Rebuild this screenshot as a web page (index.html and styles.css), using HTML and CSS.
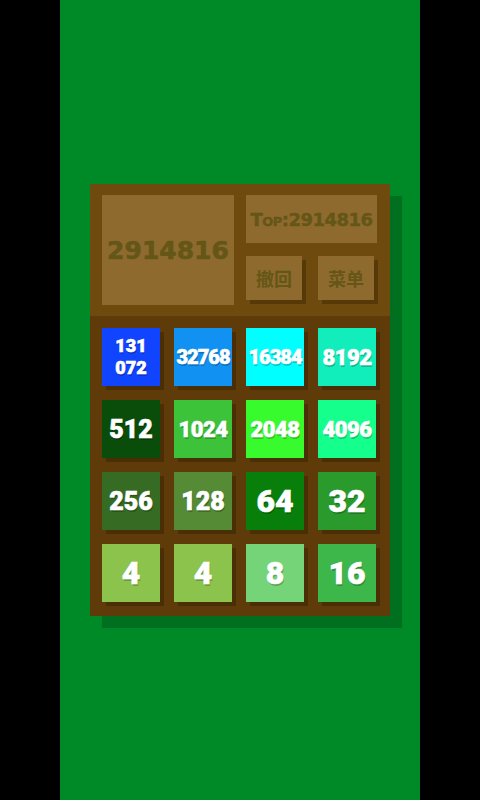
FILE: index.html
```html
<!DOCTYPE html>
<html>
<head>
<meta charset="utf-8">
<link rel="stylesheet" href="styles.css">
</head>
<body>
<div class="screen">
  <div class="board">
    <div class="header">
      <div class="score">2914816</div>
      <div class="side">
        <div class="top">Top:2914816</div>
        <div class="buttons">
          <div class="btn">撤回</div>
          <div class="btn">菜单</div>
        </div>
      </div>
    </div>
    <div class="grid">
      <div class="tile t131072 tiny">131<br>072</div>
      <div class="tile t32768 small">32768</div>
      <div class="tile t16384 small">16384</div>
      <div class="tile t8192 mid">8192</div>
      <div class="tile t512 big">512</div>
      <div class="tile t1024 mid">1024</div>
      <div class="tile t2048 mid">2048</div>
      <div class="tile t4096 mid">4096</div>
      <div class="tile t256 big">256</div>
      <div class="tile t128 big">128</div>
      <div class="tile t64 huge">64</div>
      <div class="tile t32 huge">32</div>
      <div class="tile t4 huge">4</div>
      <div class="tile t4 huge">4</div>
      <div class="tile t8 huge">8</div>
      <div class="tile t16 huge">16</div>
    </div>
  </div>
</div>
</body>
</html>
```
FILE: styles.css
```css
html, body {
  margin: 0;
  padding: 0;
  background: #000;
}
.screen {
  width: 360px;
  height: 800px;
  margin: 0 auto;
  background: #008a27;
  padding-top: 184px;
  box-sizing: border-box;
  font-family: Roboto, "DejaVu Sans", sans-serif;
}
.board {
  margin-left: 30px;
  width: 300px;
  box-shadow: 12px 12px 0 #006f1f;
}
.header {
  background: #6e4a0e;
  padding: 11px 13px 11px 12px;
  display: flex;
  gap: 12px;
}
.score {
  width: 132px;
  height: 110px;
  background: #8f6a2f;
  color: #645616;
  font-family: "DejaVu Sans", sans-serif;
  font-weight: 700;
  font-size: 25px;
  -webkit-text-stroke: 0.6px #645616;
  display: flex;
  align-items: center;
  justify-content: center;
}
.side {
  width: 131px;
  display: flex;
  flex-direction: column;
  gap: 13px;
}
.top {
  height: 48px;
  background: #8f6a2f;
  color: #645616;
  font-family: "DejaVu Sans", sans-serif;
  font-weight: 700;
  font-size: 18px;
  font-variant: small-caps;
  -webkit-text-stroke: 0.4px #645616;
  display: flex;
  align-items: center;
  justify-content: center;
  letter-spacing: -0.5px;
}
.buttons {
  display: flex;
  gap: 16px;
}
.btn {
  width: 56px;
  height: 44px;
  background: #8f6a2f;
  color: #645616;
  box-shadow: 4px 4px 0 #573807;
  font-family: "Noto Sans CJK SC", sans-serif;
  font-size: 18px;
  font-weight: 700;
  display: flex;
  align-items: center;
  justify-content: center;
}
.grid {
  background: #5e3b08;
  padding: 12px 14px 14px 12px;
  display: grid;
  grid-template-columns: repeat(4, 58px);
  grid-auto-rows: 58px;
  gap: 14px;
}
.tile {
  box-shadow: 4px 4px 0 #4a2e05;
  color: #fff;
  font-weight: 900;
  -webkit-text-stroke: 0.6px #fff;
  display: flex;
  align-items: center;
  justify-content: center;
  text-align: center;
  text-shadow: 1px 2px 0 rgba(0, 0, 0, 0.22);
}
.tiny { font-size: 18px; line-height: 22px; }
.small { font-size: 20px; letter-spacing: -1px; }
.mid { font-size: 22px; letter-spacing: -0.5px; }
.big { font-size: 25px; }
.huge { font-size: 32px; }

.t131072 { background: #1144ff; }
.t32768 { background: #1191f2; }
.t16384 { background: #00ffff; }
.t8192 { background: #12eebb; }
.t512 { background: #0a4d0a; }
.t1024 { background: #3cc33a; }
.t2048 { background: #38fb2e; }
.t4096 { background: #14ff8c; }
.t256 { background: #356b22; }
.t128 { background: #548b34; }
.t64 { background: #087f0b; }
.t32 { background: #2a9a2c; }
.t4 { background: #8cc34c; }
.t8 { background: #76d478; }
.t16 { background: #3db64a; }
```
